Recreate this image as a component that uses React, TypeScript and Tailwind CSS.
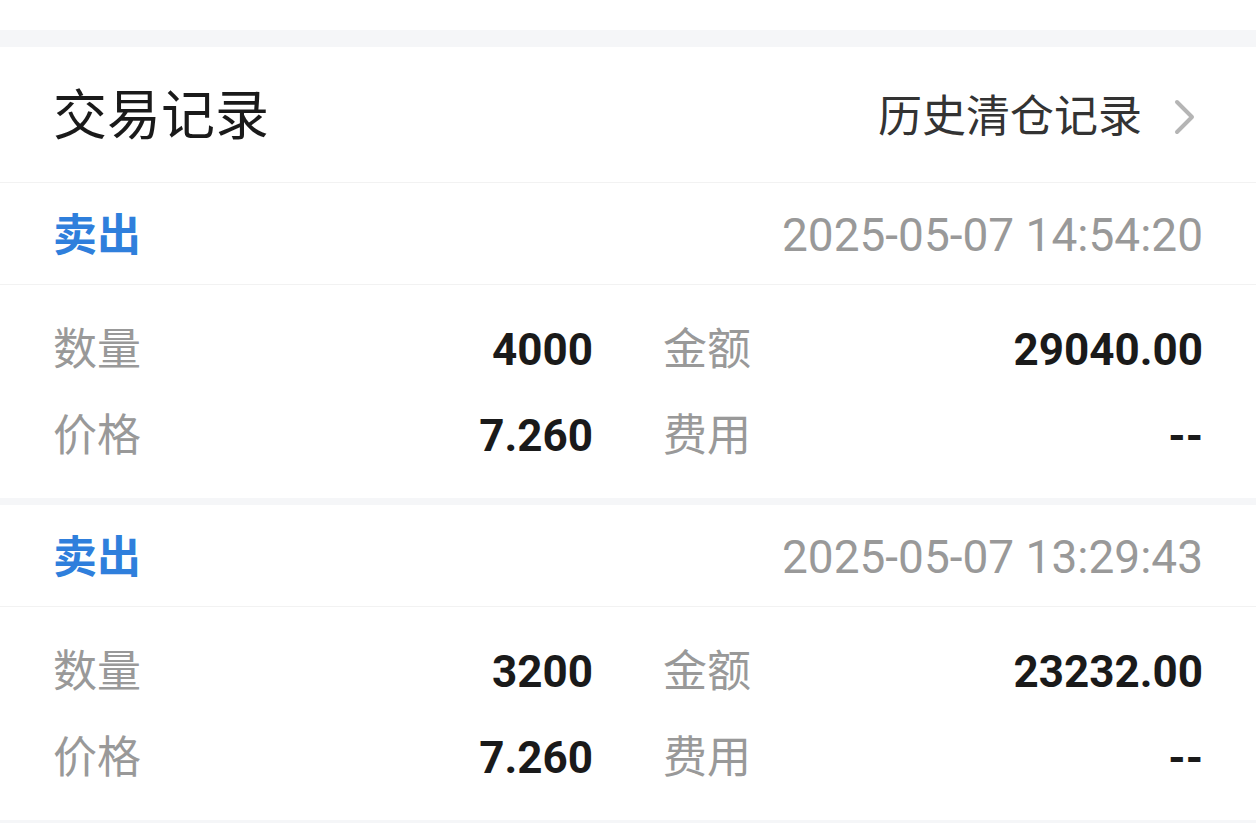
const trades = [
  { side: '卖出', time: '2025-05-07 14:54:20', qty: '4000', amount: '29040.00', price: '7.260', fee: '--' },
  { side: '卖出', time: '2025-05-07 13:29:43', qty: '3200', amount: '23232.00', price: '7.260', fee: '--' },
];

const font = "font-['Roboto','Noto_Sans_CJK_SC',sans-serif]";

function Cell({ label, value }: { label: string; value: string }) {
  return (
    <div className="flex h-[86px] items-center justify-between">
      <span className="text-[44px] text-[#999999]">{label}</span>
      <span className="text-[44px] font-bold text-[#1a1a1a]">{value}</span>
    </div>
  );
}

export default function App() {
  return (
    <div className={`h-[823px] w-[1256px] overflow-hidden bg-white ${font}`}>
      <div className="h-[30px] bg-white" />
      <div className="h-[17px] bg-[#f5f6f8]" />

      <div className="flex h-[136px] items-center justify-between border-b border-[#f2f2f2] pl-[53px] pr-[60px] pt-[4px]">
        <h2 className="text-[54px] leading-none text-[#1a1a1a]">交易记录</h2>
        <a className="flex items-center gap-[32px] text-[44px] leading-none text-[#333333]">
          历史清仓记录
          <svg width="22" height="36" viewBox="0 0 22 36" fill="none">
            <path d="M3 3 L18 18 L3 33" stroke="#b5b5b5" strokeWidth="4" strokeLinecap="round" strokeLinejoin="round" />
          </svg>
        </a>
      </div>

      {trades.map((t, i) => (
        <section key={i} className={i > 0 ? 'border-t-[7px] border-[#f5f6f8]' : ''}>
          <div className="flex h-[102px] items-center justify-between border-b border-[#f2f2f2] px-[53px] pt-[4px]">
            <span className="text-[44px] font-bold text-[#2f7fdc]">{t.side}</span>
            <span className="text-[46px] text-[#999999]">{t.time}</span>
          </div>
          <div className="grid grid-cols-2 gap-x-[70px] px-[53px] pb-[19px] pt-[22px]">
            <Cell label="数量" value={t.qty} />
            <Cell label="金额" value={t.amount} />
            <Cell label="价格" value={t.price} />
            <Cell label="费用" value={t.fee} />
          </div>
        </section>
      ))}
      <div className="h-[7px] bg-[#f5f6f8]" />
    </div>
  );
}
